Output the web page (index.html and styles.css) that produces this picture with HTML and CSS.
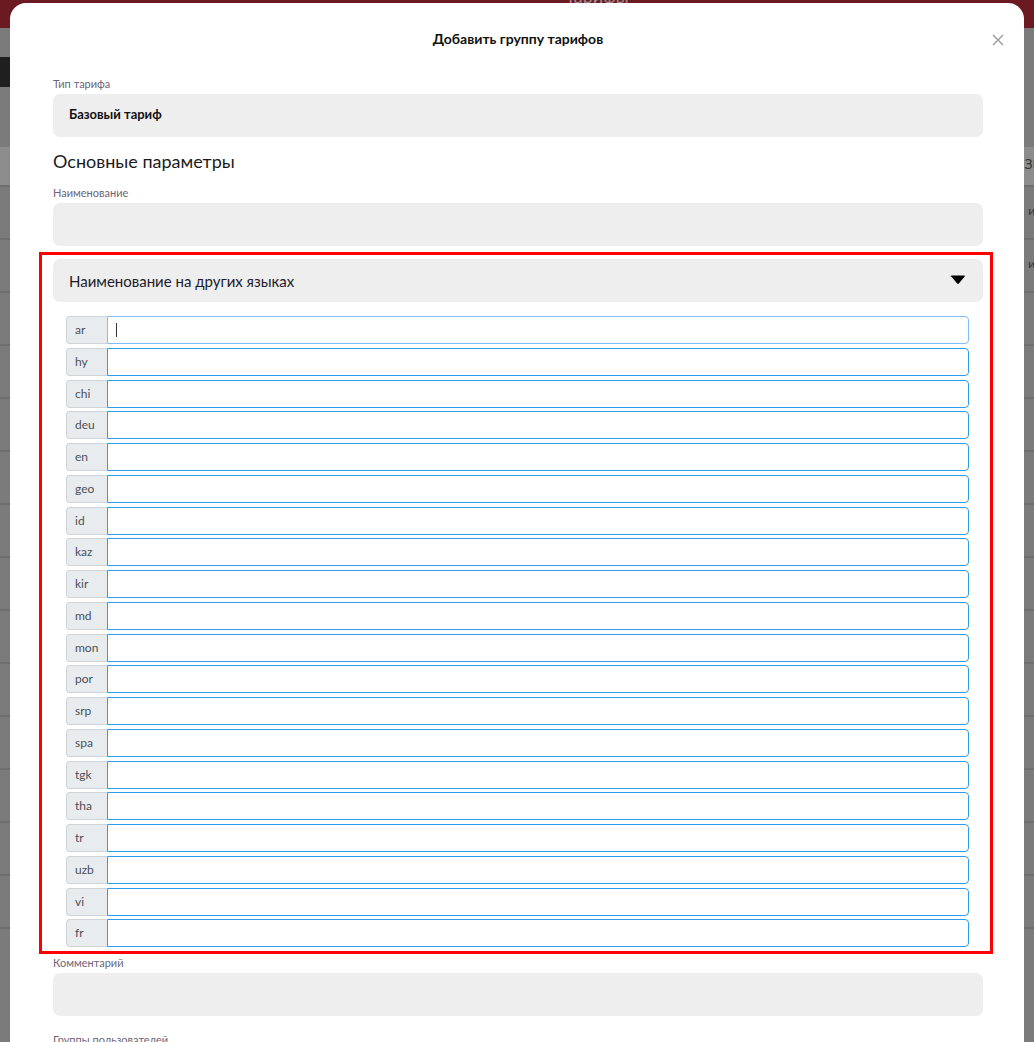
FILE: index.html
```html
<!DOCTYPE html>
<html lang="ru">
<head>
    <meta charset="UTF-8">
    <meta name="viewport" content="width=device-width, initial-scale=1.0">
    <title>Добавить группу тарифов</title>
    <link rel="stylesheet" href="styles.css">
</head>
<body>

    <!-- Page behind the dialog -->
    <div class="page">
        <div class="page-header"><span class="page-title">Тарифы</span></div>
        <div class="page-toolbar">
            <span class="toolbar-btn">Тарифы</span>
        </div>
        <div class="page-table">
            <div class="table-row head"><span class="cell-end">ЗГ</span></div>
            <div class="table-row"><span class="cell-end">и.</span></div>
            <div class="table-row"><span class="cell-end">и.</span></div>
            <div class="table-row"></div>
            <div class="table-row"></div>
            <div class="table-row"></div>
            <div class="table-row"></div>
            <div class="table-row"></div>
            <div class="table-row"></div>
            <div class="table-row"></div>
            <div class="table-row"></div>
            <div class="table-row"></div>
            <div class="table-row"></div>
            <div class="table-row"></div>
            <div class="table-row"></div>
            <div class="table-row"></div>
        </div>
    </div>

    <!-- Dialog -->
    <div class="modal">
        <div class="modal-header">
            <h2 class="modal-title">Добавить группу тарифов</h2>
            <button class="close-btn" aria-label="Закрыть">
                <svg width="12" height="12" viewBox="0 0 12 12">
                    <path d="M1 1 L11 11 M11 1 L1 11" stroke="#9a9a9a" stroke-width="1.4" fill="none"/>
                </svg>
            </button>
        </div>

        <div class="field">
            <label class="field-label">Тип тарифа</label>
            <div class="field-box bold">Базовый тариф</div>
        </div>

        <h3 class="section-title">Основные параметры</h3>

        <div class="field">
            <label class="field-label">Наименование</label>
            <div class="field-box"></div>
        </div>

        <!-- Translations -->
        <div class="translations">
            <div class="accordion-head">
                <span>Наименование на других языках</span>
                <svg class="caret" width="16" height="10" viewBox="0 0 16 10">
                    <path d="M0.5 1.5 Q0.5 0.5 1.8 0.5 L14.2 0.5 Q15.5 0.5 14.7 1.6 L8.8 8.6 Q8 9.5 7.2 8.6 L1.3 1.6 Z" fill="#000"/>
                </svg>
            </div>

            <div class="lang-list">
                <div class="input-group focused">
                    <span class="input-prefix">ar</span>
                    <input class="input" type="text">
                    <span class="text-caret"></span>
                </div>
                <div class="input-group"><span class="input-prefix">hy</span><input class="input" type="text"></div>
                <div class="input-group"><span class="input-prefix">chi</span><input class="input" type="text"></div>
                <div class="input-group"><span class="input-prefix">deu</span><input class="input" type="text"></div>
                <div class="input-group"><span class="input-prefix">en</span><input class="input" type="text"></div>
                <div class="input-group"><span class="input-prefix">geo</span><input class="input" type="text"></div>
                <div class="input-group"><span class="input-prefix">id</span><input class="input" type="text"></div>
                <div class="input-group"><span class="input-prefix">kaz</span><input class="input" type="text"></div>
                <div class="input-group"><span class="input-prefix">kir</span><input class="input" type="text"></div>
                <div class="input-group"><span class="input-prefix">md</span><input class="input" type="text"></div>
                <div class="input-group"><span class="input-prefix">mon</span><input class="input" type="text"></div>
                <div class="input-group"><span class="input-prefix">por</span><input class="input" type="text"></div>
                <div class="input-group"><span class="input-prefix">srp</span><input class="input" type="text"></div>
                <div class="input-group"><span class="input-prefix">spa</span><input class="input" type="text"></div>
                <div class="input-group"><span class="input-prefix">tgk</span><input class="input" type="text"></div>
                <div class="input-group"><span class="input-prefix">tha</span><input class="input" type="text"></div>
                <div class="input-group"><span class="input-prefix">tr</span><input class="input" type="text"></div>
                <div class="input-group"><span class="input-prefix">uzb</span><input class="input" type="text"></div>
                <div class="input-group"><span class="input-prefix">vi</span><input class="input" type="text"></div>
                <div class="input-group"><span class="input-prefix">fr</span><input class="input" type="text"></div>
            </div>
        </div>

        <div class="field after-box">
            <label class="field-label">Комментарий</label>
            <div class="field-box"></div>
        </div>

        <div class="field group-field">
            <label class="field-label">Группы пользователей</label>
            <div class="field-box"></div>
        </div>
    </div>

</body>
</html>
```

FILE: styles.css
```css
/* Global Styles */
* {
    margin: 0;
    padding: 0;
    box-sizing: border-box;
    font-family: Lato, "Open Sans", "Noto Sans", sans-serif;
}

body {
    background-color: #7b7b7b;
    height: 1042px;
    overflow: hidden;
}

/* Page behind the dialog (dimmed) */
.page-header {
    height: 28px;
    background: #6c1a21;
    text-align: center;
    overflow: hidden;
}

.page-title {
    display: block;
    color: #a08a8e;
    font-size: 18px;
    line-height: 18px;
    margin-top: -13px;
    margin-left: 160px;
}

.page-toolbar {
    padding-top: 29px;
    height: 87px;
}

.toolbar-btn {
    display: block;
    width: 70px;
    height: 30px;
    margin-left: -52px;
    background: #1f1f1f;
    color: #8a8a8a;
    font-size: 14px;
    line-height: 30px;
}

.page-table {
    margin-top: 32px;
}

.table-row {
    height: 53px;
    border-top: 2px solid #6e6e6e;
    position: relative;
}

.table-row.head {
    height: 38px;
    background: #8c8c8c;
    border-top: none;
}

.cell-end {
    position: absolute;
    right: -4px;
    top: 16px;
    font-size: 12px;
    color: #333;
}

.table-row.head .cell-end {
    top: 8px;
    right: -6px;
    font-size: 14px;
}

/* Dialog */
.modal {
    position: absolute;
    top: 3px;
    left: 10px;
    width: 1014px;
    height: 1100px;
    background: #fff;
    border-radius: 16px 16px 0 0;
    padding: 27px 41px 0 43px;
}

.modal-header {
    position: relative;
    margin-bottom: 29px;
}

.modal-title {
    font-size: 14px;
    line-height: 18px;
    font-weight: 700;
    text-align: center;
    color: #111;
}

.close-btn {
    position: absolute;
    top: 4px;
    right: -21px;
    background: none;
    border: none;
    cursor: pointer;
    display: flex;
}

/* Form fields */
.field-label {
    display: block;
    font-size: 11px;
    line-height: 14px;
    color: #6d6577;
    margin-bottom: 3px;
}

.field-box {
    height: 43px;
    background: #eeeeee;
    border-radius: 7px;
    padding: 0 16px;
    font-size: 13px;
    line-height: 40px;
    color: #111;
}

.field-box.bold {
    font-weight: 700;
}

.section-title {
    font-size: 18px;
    line-height: 24px;
    font-weight: 400;
    color: #1c1c1c;
    margin: 12px 0 13px;
}

/* Translations block */
.translations {
    margin: 6px -10px 0 -14px;
    border: 3px solid #ff0000;
    padding: 4px 7px 4px 11px;
}

.accordion-head {
    height: 43px;
    background: #eeeeee;
    border-radius: 7px;
    display: flex;
    align-items: center;
    justify-content: space-between;
    padding: 0 17px 0 16px;
    font-size: 15px;
    color: #1c1c2c;
}

.caret {
    margin-top: -2px;
}

.lang-list {
    padding: 14px 14px 0 13px;
    display: flex;
    flex-direction: column;
    gap: 3.75px;
}

.input-group {
    display: flex;
    height: 28px;
    position: relative;
}

.input-prefix {
    width: 41px;
    flex-shrink: 0;
    background: #e9ecef;
    border: 1px solid #ced4da;
    border-right: none;
    border-radius: 4px 0 0 4px;
    font-size: 12px;
    line-height: 26px;
    padding-left: 8px;
    color: #495057;
}

.input {
    flex: 1;
    border: 1px solid #2d9cf0;
    border-radius: 0 4px 4px 0;
    outline: none;
    background: #fff;
}

.input-group.focused .input {
    border-color: #80bdff;
}

.text-caret {
    position: absolute;
    left: 50px;
    top: 7px;
    width: 1px;
    height: 14px;
    background: #333;
}

.after-box {
    margin-top: 2px;
}

.group-field {
    margin-top: 17px;
}
```
